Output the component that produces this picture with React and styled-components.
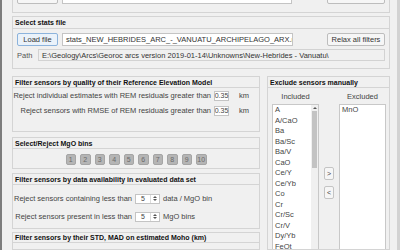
import React from 'react';
import styled, { createGlobalStyle } from 'styled-components';

const GlobalStyle = createGlobalStyle`
  *, *::before, *::after { box-sizing: border-box; }
  html, body { margin: 0; padding: 0; background: #f0f0f0; overflow: hidden; }
  body {
    font-family: "Liberation Sans", Arial, sans-serif;
    font-size: 7.5px;
    color: #444;
  }
`;

const Window = styled.div`
  width: 400px;
  height: 250px;
  display: flex;
  overflow: hidden;
  background: #f0f0f0;
  border-left: 2px solid #7d7d7d;
  border-right: 3px solid #d2d2d2;
`;

const Content = styled.div`
  flex: 1;
  min-width: 0;
  display: flex;
  flex-direction: column;
  padding: 0 7px 0 10px;
`;

const Panel = styled.section`
  border: 1px solid #d4d4d4;
  display: flex;
  flex-direction: column;
  margin-top: ${(p) => p.$mt || 0}px;
  flex: ${(p) => (p.$grow ? 1 : 'none')};
  min-height: 0;
`;

const TopPanel = styled.section`
  height: 13px;
  flex: none;
  border: 1px solid #d4d4d4;
  border-top: none;
  display: flex;
  align-items: flex-end;
  gap: 4px;
  padding: 0 4px 8px;
  overflow: hidden;
`;

const PanelTitle = styled.div`
  height: ${(p) => p.$h || 11}px;
  flex: none;
  display: flex;
  align-items: center;
  padding: 0 2px;
  font-weight: bold;
  font-size: 7px;
  color: #111;
  white-space: nowrap;
  border-bottom: 1px solid #d4d4d4;
`;

const Button = styled.button`
  height: 13px;
  width: ${(p) => p.$w}px;
  flex: none;
  padding: 0;
  font-family: inherit;
  font-size: 7.5px;
  color: #333;
  background: ${(p) => (p.$focus ? '#eaf2fa' : '#f6f6f6')};
  border: 1px solid ${(p) => (p.$focus ? '#8cb3dc' : '#bdbdbd')};
  border-radius: 2px;
`;

const Field = styled.div`
  height: ${(p) => p.$h || 13}px;
  flex: ${(p) => (p.$w ? 'none' : 1)};
  width: ${(p) => (p.$w ? `${p.$w}px` : 'auto')};
  min-width: 0;
  padding: 0 3px;
  display: flex;
  align-items: center;
  white-space: nowrap;
  overflow: hidden;
  color: #333;
  background: ${(p) => (p.$readonly ? '#f0f0f0' : '#fff')};
  border: 1px solid ${(p) => (p.$readonly ? '#d2d2d2' : '#c4c4c4')};
`;

const StatsBody = styled.div`
  display: flex;
  flex-direction: column;
  gap: 3px;
  padding: 4px 4px 7px;
`;

const Row = styled.div`
  display: flex;
  align-items: center;
  gap: ${(p) => p.$gap || 0}px;
`;

const Spacer = styled.div`
  flex: 1;
`;

const PathLabel = styled.span`
  width: 21px;
  flex: none;
  color: #555;
`;

const Lower = styled.div`
  flex: 1;
  min-height: 0;
  margin-top: 7px;
  display: grid;
  grid-template-columns: 1fr 123px;
  column-gap: 7px;
`;

const Column = styled.div`
  display: flex;
  flex-direction: column;
  min-height: 0;
`;

const ThresholdBody = styled.div`
  display: flex;
  flex-direction: column;
  gap: 4px;
  padding: 2px 0 15px;
`;

const ThresholdRow = styled.div`
  display: flex;
  align-items: center;
  height: 11px;
`;

const RightLabel = styled.span`
  flex: ${(p) => (p.$w ? 'none' : 1)};
  width: ${(p) => (p.$w ? `${p.$w}px` : 'auto')};
  text-align: right;
  white-space: nowrap;
  padding-right: 3px;
`;

const NumBox = styled.div`
  width: 15px;
  height: 10px;
  background: #fff;
  border: 1px solid #c4c4c4;
  font-size: 7px;
  display: flex;
  align-items: center;
  justify-content: center;
`;

const Unit = styled.span`
  width: ${(p) => p.$w || 20}px;
  margin-left: ${(p) => p.$ml || 0}px;
  white-space: nowrap;
`;

const BinsBody = styled.div`
  display: flex;
  justify-content: center;
  gap: 4px;
  padding: 5px 0 3px;
`;

const BinButton = styled.div`
  width: 10.5px;
  height: 11px;
  background: #b5b5b5;
  border: 1px solid #a5a5a5;
  border-radius: 2px;
  color: #6a6a6a;
  font-size: 7px;
  display: flex;
  align-items: center;
  justify-content: center;
`;

const AvailBody = styled.div`
  display: flex;
  flex-direction: column;
  gap: 7px;
  padding: 8px 0 6px;
`;

const Spin = styled.div`
  width: 25px;
  height: 10px;
  display: flex;
  background: #fff;
  border: 1px solid #c4c4c4;
`;

const SpinValue = styled.div`
  flex: 1;
  font-size: 7px;
  display: flex;
  align-items: center;
  justify-content: center;
`;

const SpinArrows = styled.div`
  width: 9px;
  border-left: 1px solid #dcdcdc;
  display: flex;
  flex-direction: column;
  align-items: center;
  justify-content: space-evenly;
`;

const Tri = styled.div`
  width: 0;
  height: 0;
  border-left: 2px solid transparent;
  border-right: 2px solid transparent;
  ${(p) => (p.$down ? 'border-top: 2px solid #555;' : 'border-bottom: 2px solid #555;')}
`;

const ExcludeBody = styled.div`
  flex: 1;
  min-height: 0;
  display: grid;
  grid-template-columns: 47px 20px 47px;
  grid-template-rows: 11px 1fr;
  padding: 4px 5px 0 4px;
  row-gap: 1px;
`;

const ListHeader = styled.div`
  text-align: center;
  color: #444;
  line-height: 10px;
`;

const ListBox = styled.div`
  display: flex;
  background: #fff;
  border: 1px solid #c8c8c8;
  border-bottom: none;
  min-height: 0;
  overflow: hidden;
`;

const Items = styled.div`
  flex: 1;
  padding: 0 0 0 2px;
`;

const Item = styled.div`
  line-height: 10.5px;
  white-space: nowrap;
  color: #444;
`;

const ScrollBar = styled.div`
  width: 7px;
  background: #f0f0f0;
  display: flex;
  flex-direction: column;
  align-items: center;
`;

const ScrollArrow = styled.div`
  height: 6px;
  display: flex;
  align-items: center;
`;

const Thumb = styled.div`
  width: 5px;
  height: 57px;
  background: #c3c3c3;
`;

const MoveButtons = styled.div`
  display: flex;
  flex-direction: column;
  align-items: center;
  gap: 6px;
  padding-top: 63px;
`;

const MoveButton = styled.div`
  width: 10px;
  height: 13px;
  background: #f6f6f6;
  border: 1px solid #c4c4c4;
  border-radius: 2px;
  font-size: 7px;
  color: #444;
  display: flex;
  align-items: center;
  justify-content: center;
`;

const included = [
  'A', 'A/CaO', 'Ba', 'Ba/Sc', 'Ba/V', 'CaO', 'Ce/Y', 'Ce/Yb', 'Co', 'Cr',
  'Cr/Sc', 'Cr/V', 'Dy/Yb', 'FeOt', 'Gd/Yb',
];

const bins = [1, 2, 3, 4, 5, 6, 7, 8, 9, 10];

export default function App() {
  return (
    <>
      <GlobalStyle />
      <Window>
        <Content>
          <TopPanel>
            <Button $w={41}>Load file</Button>
            <Field $w={230}>...</Field>
            <Spacer />
            <Button $w={58}>Save all files</Button>
          </TopPanel>

          <Panel $mt={3}>
            <PanelTitle $h={12}>Select stats file</PanelTitle>
            <StatsBody>
              <Row $gap={4}>
                <Button $w={41} $focus>Load file</Button>
                <Field $w={231}>stats_NEW_HEBRIDES_ARC_-_VANUATU_ARCHIPELAGO_ARX.mat</Field>
                <Spacer />
                <Button $w={58}>Relax all filters</Button>
              </Row>
              <Row>
                <PathLabel>Path</PathLabel>
                <Field $h={12} $readonly>
                  E:\Geology\Arcs\Georoc arcs version 2019-01-14\Unknowns\New-Hebrides - Vanuatu\
                </Field>
              </Row>
            </StatsBody>
          </Panel>

          <Lower>
            <Column>
              <Panel>
                <PanelTitle>Filter sensors by quality of their Reference Elevation Model</PanelTitle>
                <ThresholdBody>
                  <ThresholdRow>
                    <RightLabel>Reject individual estimates with REM residuals greater than</RightLabel>
                    <NumBox>0.35</NumBox>
                    <Unit $ml={10}>km</Unit>
                  </ThresholdRow>
                  <ThresholdRow>
                    <RightLabel>Reject sensors with RMSE of REM residuals greater than</RightLabel>
                    <NumBox>0.35</NumBox>
                    <Unit $ml={10}>km</Unit>
                  </ThresholdRow>
                </ThresholdBody>
              </Panel>

              <Panel $mt={5}>
                <PanelTitle>Select/Reject MgO bins</PanelTitle>
                <BinsBody>
                  {bins.map((b) => (
                    <BinButton key={b}>{b}</BinButton>
                  ))}
                </BinsBody>
              </Panel>

              <Panel $mt={4}>
                <PanelTitle>Filter sensors by data availability in evaluated data set</PanelTitle>
                <AvailBody>
                  <ThresholdRow>
                    <RightLabel $w={122}>Reject sensors containing less than</RightLabel>
                    <Spin>
                      <SpinValue>5</SpinValue>
                      <SpinArrows><Tri /><Tri $down /></SpinArrows>
                    </Spin>
                    <Unit $ml={3} $w={60}>data / MgO bin</Unit>
                  </ThresholdRow>
                  <ThresholdRow>
                    <RightLabel $w={122}>Reject sensors present in less than</RightLabel>
                    <Spin>
                      <SpinValue>5</SpinValue>
                      <SpinArrows><Tri /><Tri $down /></SpinArrows>
                    </Spin>
                    <Unit $ml={3} $w={60}>MgO bins</Unit>
                  </ThresholdRow>
                </AvailBody>
              </Panel>

              <Panel $mt={3} $grow>
                <PanelTitle $h={10}>Filter sensors by their STD, MAD on estimated Moho (km)</PanelTitle>
              </Panel>
            </Column>

            <Panel $grow>
              <PanelTitle>Exclude sensors manually</PanelTitle>
              <ExcludeBody>
                <ListHeader>Included</ListHeader>
                <div />
                <ListHeader>Excluded</ListHeader>
                <ListBox>
                  <Items>
                    {included.map((s) => (
                      <Item key={s}>{s}</Item>
                    ))}
                  </Items>
                  <ScrollBar>
                    <ScrollArrow><Tri /></ScrollArrow>
                    <Thumb />
                  </ScrollBar>
                </ListBox>
                <MoveButtons>
                  <MoveButton>&gt;</MoveButton>
                  <MoveButton>&lt;</MoveButton>
                </MoveButtons>
                <ListBox>
                  <Items>
                    <Item>MnO</Item>
                  </Items>
                </ListBox>
              </ExcludeBody>
            </Panel>
          </Lower>
        </Content>
      </Window>
    </>
  );
}
